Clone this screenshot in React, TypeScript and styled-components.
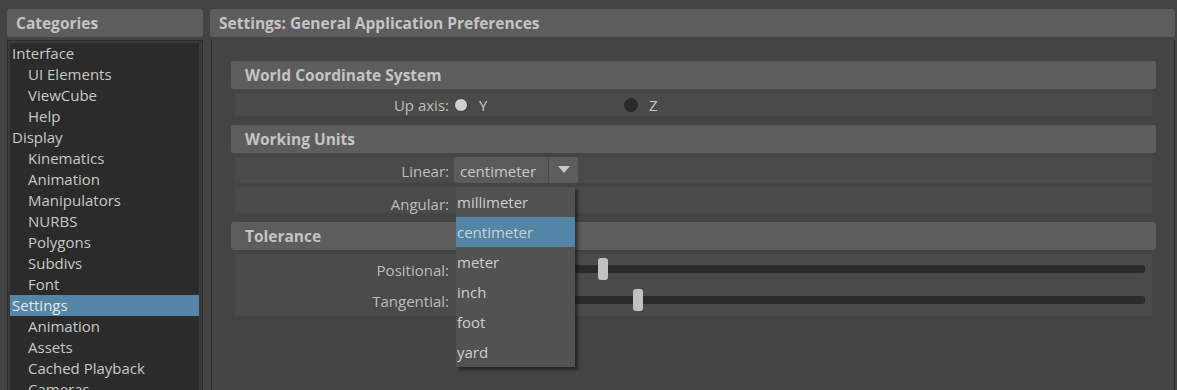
import React from 'react'
import styled, { createGlobalStyle } from 'styled-components'

//-----------------------------------------------------------------------------
// Data
//-----------------------------------------------------------------------------
const categories: { label: string; depth: number; selected?: boolean }[] = [
  { label: 'Interface', depth: 0 },
  { label: 'UI Elements', depth: 1 },
  { label: 'ViewCube', depth: 1 },
  { label: 'Help', depth: 1 },
  { label: 'Display', depth: 0 },
  { label: 'Kinematics', depth: 1 },
  { label: 'Animation', depth: 1 },
  { label: 'Manipulators', depth: 1 },
  { label: 'NURBS', depth: 1 },
  { label: 'Polygons', depth: 1 },
  { label: 'Subdivs', depth: 1 },
  { label: 'Font', depth: 1 },
  { label: 'Settings', depth: 0, selected: true },
  { label: 'Animation', depth: 1 },
  { label: 'Assets', depth: 1 },
  { label: 'Cached Playback', depth: 1 },
  { label: 'Cameras', depth: 1 }
]

const units = ['millimeter', 'centimeter', 'meter', 'inch', 'foot', 'yard']

//-----------------------------------------------------------------------------
// Component
//-----------------------------------------------------------------------------
const Slider = ({ handleX }: { handleX: number }) => (
  <Track>
    <Handle style={{ left: handleX }} />
  </Track>
)

export const App = () => {
  return (
    <>
      <GlobalStyle />
      <Window>
        <LeftColumn>
          <PanelHeader>Categories</PanelHeader>
          <ListFrame>
            <List>
              {categories.map((item, index) => (
                <ListItem key={index} depth={item.depth} selected={item.selected}>
                  {item.label}
                </ListItem>
              ))}
            </List>
          </ListFrame>
        </LeftColumn>

        <RightColumn>
          <PanelHeader>Settings: General Application Preferences</PanelHeader>
          <ScrollArea>
            <Section>
              <SectionHeader>World Coordinate System</SectionHeader>
              <SectionBody>
                <Row height={23}>
                  <Label>Up axis:</Label>
                  <RadioOption>
                    <Radio checked />
                    <RadioText>Y</RadioText>
                  </RadioOption>
                  <RadioOption>
                    <Radio />
                    <RadioText>Z</RadioText>
                  </RadioOption>
                </Row>
              </SectionBody>
            </Section>

            <Section>
              <SectionHeader>Working Units</SectionHeader>
              <SplitBody>
                <Row height={26} filled>
                  <Label offset={2}>Linear:</Label>
                  <DropdownWrap>
                    <Dropdown>
                      <DropdownValue>centimeter</DropdownValue>
                      <DropdownButton>
                        <svg width="12" height="7" viewBox="0 0 12 7">
                          <path d="M0 0 L12 0 L6 7 Z" fill="#c8c8c8" />
                        </svg>
                      </DropdownButton>
                    </Dropdown>
                    <Popup>
                      {units.map(unit => (
                        <PopupItem key={unit} active={unit === 'centimeter'}>
                          {unit}
                        </PopupItem>
                      ))}
                    </Popup>
                  </DropdownWrap>
                </Row>
                <Row height={26} filled>
                  <Label offset={7}>Angular:</Label>
                </Row>
              </SplitBody>
            </Section>

            <Section>
              <SectionHeader>Tolerance</SectionHeader>
              <SectionBody padTop={1}>
                <Row height={28}>
                  <Label offset={2}>Positional:</Label>
                  <Slider handleX={140} />
                </Row>
                <Row height={33}>
                  <Label offset={2}>Tangential:</Label>
                  <Slider handleX={175} />
                </Row>
              </SectionBody>
            </Section>
          </ScrollArea>
        </RightColumn>
      </Window>
    </>
  )
}

//-----------------------------------------------------------------------------
// Styled Components
//-----------------------------------------------------------------------------
const GlobalStyle = createGlobalStyle`
  html, body {
    margin: 0;
    padding: 0;
    background: #444444;
    overflow: hidden;
  }
  body {
    font-family: "Open Sans", "Noto Sans", sans-serif;
    color: #c8c8c8;
  }
`

const Window = styled.div`
  height: 390px;
  display: flex;
  padding: 9px 2px 0 7px;
  box-sizing: border-box;
  gap: 7px;
  overflow: hidden;
`

const LeftColumn = styled.div`
  width: 196px;
  display: flex;
  flex-direction: column;
  flex-shrink: 0;
`

const RightColumn = styled.div`
  flex: 1;
  display: flex;
  flex-direction: column;
`

const PanelHeader = styled.div`
  height: 28px;
  background: #5d5d5d;
  border-radius: 3px;
  font-size: 15.5px;
  font-weight: 700;
  color: #c4c4c4;
  padding-left: 9px;
  display: flex;
  align-items: center;
  flex-shrink: 0;
`

const ListFrame = styled.div`
  margin-top: 3px;
  flex: 1;
  border: 1px solid #2c2c2c;
  background: #3a3a3a;
  padding: 2px 3px 0 2px;
`

const List = styled.div`
  background: #2b2b2b;
  height: 100%;
`

const ListItem = styled.div<{ depth: number; selected?: boolean }>`
  height: 21px;
  line-height: 21px;
  font-size: 15px;
  white-space: nowrap;
  padding-left: ${p => 2 + p.depth * 16}px;
  background: ${p => (p.selected ? '#5285a6' : 'transparent')};
  color: ${p => (p.selected ? '#e6e6e6' : '#c8c8c8')};
`

const ScrollArea = styled.div`
  flex: 1;
  margin-top: 3px;
  border-left: 1px solid #2b2b2b;
  border-right: 1px solid #2b2b2b;
  margin-left: 1px;
  padding: 21px 18px 0 19px;
  display: flex;
  flex-direction: column;
  gap: 9px;
`

const Section = styled.div`
  display: flex;
  flex-direction: column;
`

const SectionHeader = styled.div`
  height: 28px;
  background: #5d5d5d;
  border-radius: 3px;
  font-size: 15.5px;
  font-weight: 700;
  color: #c4c4c4;
  padding-left: 14px;
  display: flex;
  align-items: center;
`

const SectionBody = styled.div<{ padTop?: number }>`
  margin: 4px 4px 0 4px;
  padding-top: ${p => p.padTop ?? 0}px;
  background: #4a4a4a;
`

const SplitBody = styled.div`
  margin: 4px 4px 0 4px;
  display: flex;
  flex-direction: column;
  gap: 4px;
`

const Row = styled.div<{ height: number; filled?: boolean }>`
  height: ${p => p.height}px;
  display: flex;
  align-items: center;
  background: ${p => (p.filled ? '#4a4a4a' : 'transparent')};
`

const Label = styled.div<{ offset?: number }>`
  width: 219px;
  flex-shrink: 0;
  text-align: right;
  font-size: 15px;
  color: #bdbdbd;
  padding-right: 5px;
  padding-top: ${p => p.offset ?? 0}px;
  box-sizing: border-box;
`

const RadioOption = styled.div`
  width: 170px;
  display: flex;
  align-items: center;
  gap: 11px;
`

const Radio = styled.span<{ checked?: boolean }>`
  width: 14px;
  height: 14px;
  border-radius: 50%;
  box-sizing: border-box;
  background: ${p => (p.checked ? '#cfcfcf' : '#2b2b2b')};
  border: 1px solid ${p => (p.checked ? '#3a3a3a' : '#2b2b2b')};
`

const RadioText = styled.span`
  font-size: 15px;
  color: #c8c8c8;
`

const DropdownWrap = styled.div`
  position: relative;
  height: 26px;
`

const Dropdown = styled.div`
  width: 124px;
  height: 26px;
  display: flex;
  border-radius: 3px;
  overflow: hidden;
  background: #5a5a5a;
`

const DropdownValue = styled.div`
  flex: 1;
  padding-left: 6px;
  padding-top: 2px;
  font-size: 15px;
  color: #c8c8c8;
  display: flex;
  align-items: center;
  border-right: 1px solid #4a4a4a;
`

const DropdownButton = styled.div`
  width: 29px;
  display: flex;
  align-items: center;
  justify-content: center;
  padding-bottom: 2px;
  box-sizing: border-box;
  background: #5d5d5d;
`

const Popup = styled.div`
  position: absolute;
  top: 30px;
  left: 2px;
  width: 119px;
  background: #525252;
  box-shadow: 3px 3px 3px rgba(0, 0, 0, 0.45);
  z-index: 10;
`

const PopupItem = styled.div<{ active?: boolean }>`
  height: 30px;
  line-height: 30px;
  padding-left: 1px;
  font-size: 15px;
  color: #cfcfcf;
  background: ${p => (p.active ? '#5285a6' : 'transparent')};
`

const Track = styled.div`
  position: relative;
  flex: 1;
  height: 8px;
  margin: 0 7px 0 4px;
  background: #2b2b2b;
  border-radius: 3px;
`

const Handle = styled.div`
  position: absolute;
  top: -7px;
  width: 10px;
  height: 22px;
  border-radius: 3px;
  background: #c2c2c2;
`

export default App
